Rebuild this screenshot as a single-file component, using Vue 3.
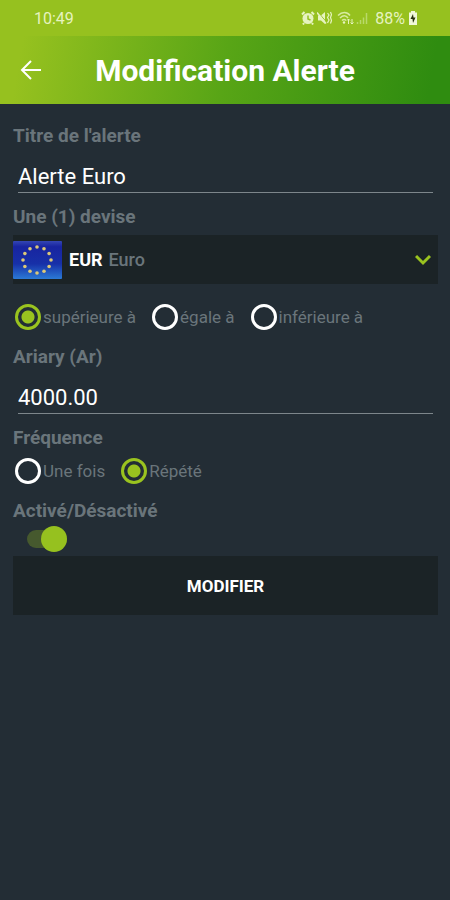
<script setup>
import { computed, ref } from "vue";

const currencies = [
  { code: "EUR", name: "Euro" },
  { code: "USD", name: "Dollar" },
  { code: "GBP", name: "Livre" },
];
const comparisons = [
  { value: "gt", label: "supérieure à" },
  { value: "eq", label: "égale à" },
  { value: "lt", label: "inférieure à" },
];
const frequencies = [
  { value: "once", label: "Une fois" },
  { value: "repeat", label: "Répété" },
];

const title = ref("Alerte Euro");
const currency = ref("Euro");
const comparison = ref("gt");
const amount = ref("4000.00");
const frequency = ref("repeat");
const active = ref(true);

const code = computed(
  () => currencies.find((item) => item.name === currency.value).code
);

// the twelve stars of the flag
const stars = Array.from({ length: 12 }, (_, i) => {
  const angle = (i * Math.PI) / 6;
  return { x: 24 + 14 * Math.sin(angle), y: 19 - 13 * Math.cos(angle) };
});
</script>

<template>
  <div class="screen">
    <div class="status">
      <span>10:49</span>
      <div class="status__icons">
        <svg width="14" height="14" viewBox="0 0 14 14">
          <path
            d="M1 3.500 3.500 1M10.500 1 13 3.500M3 12l-1 1.500M11 12l1 1.500"
            stroke="#e6f3c0"
            stroke-width="2"
          />
          <circle cx="7" cy="7.500" r="5.500" fill="#e6f3c0" />
          <path
            d="M7 4.500V8l2.500 1"
            fill="none"
            stroke="#94c11f"
            stroke-width="1.500"
          />
        </svg>
        <svg width="15" height="14" viewBox="0 0 15 14">
          <path d="M1 4.500h3L8 1v12L4 9.500H1z" fill="#e6f3c0" />
          <path d="M1 1l10 12" stroke="#94c11f" stroke-width="1" />
          <path d="M0 1.500l9 11" stroke="#e6f3c0" stroke-width="1.500" />
          <path
            d="M10.500 2l1.500 2-1.500 2.500L12 9l-1.500 3M13.500 1l1 2.500-1 3 1 3-1 3"
            fill="none"
            stroke="#e6f3c0"
            stroke-width="1.200"
          />
        </svg>
        <svg class="wifi" width="17" height="14" viewBox="0 0 17 14">
          <path
            d="M1 4.500c4-4 9-4 12 0M3 7c3-3 6-3 8 0M5 9.500c1.500-1.500 3-1.500 4 0"
            fill="none"
            stroke="#d7eba0"
            stroke-width="1.500"
          />
          <circle cx="7" cy="11.500" r="1.200" fill="#e6f3c0" />
          <path
            d="M11.500 13V8M10 9.500 11.500 8 13 9.500M15 8v5M13.500 11.500 15 13l1.500-1.500"
            fill="none"
            stroke="#e6f3c0"
          />
        </svg>
        <svg width="13" height="14" viewBox="0 0 13 14">
          <path
            d="M1.500 13v-2M4.500 13V9M7.500 13V6.500M10.500 13V2"
            stroke="#b9d96a"
            stroke-width="1.500"
          />
        </svg>
        <span class="status__battery">88%</span>
        <svg width="10" height="14" viewBox="0 0 10 14">
          <path d="M3 0h4v1.500h2V14H1V1.500h2z" fill="#f0f8d8" />
          <path d="M5 3 2.500 8H4.500L5 12 7.500 6.500H5.500z" fill="#26300c" />
        </svg>
      </div>
    </div>

    <header class="bar">
      <button class="bar__back" type="button" aria-label="Retour">
        <svg width="22" height="22" viewBox="0 0 22 22">
          <path
            d="M11 2 2 11l9 9M2 11h19"
            fill="none"
            stroke="#fff"
            stroke-width="2"
          />
        </svg>
      </button>
      <h1>Modification Alerte</h1>
    </header>

    <form class="form" @submit.prevent>
      <label class="heading" for="title">Titre de l'alerte</label>
      <input id="title" v-model="title" class="field" type="text" />

      <label class="heading heading--field" for="currency"
        >Une (1) devise</label
      >
      <div class="currency">
        <svg class="currency__flag" width="49" height="38" viewBox="0 0 49 38">
          <defs>
            <linearGradient id="flag" x1="0" y1="0" x2="0" y2="1">
              <stop offset="0" stop-color="#3446b4" />
              <stop offset="0.150" stop-color="#1824a0" />
              <stop offset="0.600" stop-color="#1730a8" />
              <stop offset="1" stop-color="#2b7ad6" />
            </linearGradient>
          </defs>
          <rect width="49" height="38" rx="1" fill="url(#flag)" />
          <circle
            v-for="(star, index) in stars"
            :key="index"
            :cx="star.x"
            :cy="star.y"
            r="1.800"
            fill="#dcc878"
          />
        </svg>
        <span class="currency__code">{{ code }}</span>
        <select id="currency" v-model="currency">
          <option v-for="item in currencies" :key="item.code">
            {{ item.name }}
          </option>
        </select>
        <svg class="currency__arrow" width="16" height="12" viewBox="0 0 16 12">
          <path
            d="M1 2l7 7 7-7"
            fill="none"
            stroke="#9ac31f"
            stroke-width="3"
          />
        </svg>
      </div>

      <div class="radios radios--compare" role="radiogroup" aria-label="Comparaison">
        <label v-for="item in comparisons" :key="item.value">
          <input
            v-model="comparison"
            type="radio"
            name="comparison"
            :value="item.value"
          />
          <span>{{ item.label }}</span>
        </label>
      </div>

      <label class="heading heading--radios" for="amount">Ariary (Ar)</label>
      <input
        id="amount"
        v-model="amount"
        class="field"
        type="text"
        inputmode="decimal"
      />

      <div id="frequency" class="heading heading--field">Fréquence</div>
      <div class="radios" role="radiogroup" aria-labelledby="frequency">
        <label v-for="item in frequencies" :key="item.value">
          <input
            v-model="frequency"
            type="radio"
            name="frequency"
            :value="item.value"
          />
          <span>{{ item.label }}</span>
        </label>
      </div>

      <label class="heading heading--radios" for="active"
        >Activé/Désactivé</label
      >
      <input
        id="active"
        v-model="active"
        class="switch"
        type="checkbox"
        role="switch"
      />

      <button class="submit" type="submit">MODIFIER</button>
    </form>
  </div>
</template>

<style>
body {
  margin: 0;
  background: #232d35;
}
</style>

<style scoped>
.screen {
  min-height: 100vh;
  background: #232d35;
  font-family: Roboto, "Liberation Sans", sans-serif;
  color: #fff;
}
.status {
  display: flex;
  align-items: center;
  justify-content: space-between;
  height: 36px;
  padding: 0 32px 0 34px;
  box-sizing: border-box;
  background: #96c11f;
  color: #e6f3c0;
  font-size: 16px;
}
.status__icons {
  display: flex;
  align-items: center;
  gap: 2px;
}
.wifi {
  margin-left: 3px;
}
.status__battery {
  margin: 0 1px 0 4px;
}
.bar {
  display: grid;
  grid-template-columns: 22px 1fr 22px;
  align-items: center;
  height: 68px;
  padding: 0 20px;
  background: linear-gradient(100deg, #96c11f 5%, #58a516 50%, #2f8c10 95%);
}
.bar__back {
  display: flex;
  padding: 0;
  border: 0;
  background: none;
  cursor: pointer;
}
h1 {
  margin: 0;
  padding-top: 2px;
  font-size: 30px;
  line-height: 36px;
  font-weight: bold;
  text-align: center;
  white-space: nowrap;
}
.form {
  display: flex;
  flex-direction: column;
  padding: 20px 12px 20px 13px;
}
.heading {
  color: #6a757b;
  font-size: 19px;
  line-height: 24px;
  font-weight: bold;
}
.heading--field {
  margin-top: 12px;
}
.heading--radios {
  margin-top: 15px;
}
.field {
  height: 45px;
  margin: 0 5px;
  padding: 12px 0 0;
  box-sizing: border-box;
  border: 0;
  border-bottom: 1px solid #7d868b;
  outline: 0;
  background: none;
  color: #fff;
  font: 22px Roboto, "Liberation Sans", sans-serif;
}
.currency {
  position: relative;
  display: flex;
  align-items: center;
  height: 49px;
  margin-top: 6px;
  background: #1b2326;
  font-size: 18px;
}
.currency__code {
  margin: 0 6px 0 7px;
  font-weight: bold;
}
select {
  flex: 1;
  height: 100%;
  padding: 0;
  border: 0;
  outline: 0;
  appearance: none;
  background: none;
  color: #6a757b;
  font: 500 18px Roboto, "Liberation Sans", sans-serif;
}
.currency__arrow {
  position: absolute;
  right: 7px;
  pointer-events: none;
}
.radios {
  display: flex;
  gap: 16px;
  margin-top: 8px;
  padding-left: 2px;
  color: #6a757b;
  font-size: 17px;
  line-height: 26px;
}
.radios--compare {
  margin-top: 20px;
}
.radios label {
  display: flex;
  gap: 2px;
  white-space: nowrap;
}
.radios input {
  width: 26px;
  height: 26px;
  margin: 0;
  border: 3px solid #fff;
  border-radius: 50%;
  appearance: none;
}
.radios input:checked {
  border-color: #9ac31f;
  background: radial-gradient(circle, #9ac31f 6px, transparent 7px);
}
.switch {
  display: flex;
  align-items: center;
  width: 40px;
  height: 18px;
  margin: 7px 0 8px 14px;
  appearance: none;
  background: #46592e;
  border-radius: 9px;
}
.switch::before {
  content: "";
  flex: none;
  width: 26px;
  height: 26px;
  border-radius: 50%;
  background: #c3c9cc;
}
.switch:checked::before {
  margin-left: auto;
  background: #96c11f;
}
.submit {
  height: 59px;
  border: 0;
  background: #1b2326;
  color: #fff;
  font: bold 17px Roboto, "Liberation Sans", sans-serif;
  cursor: pointer;
}
</style>
